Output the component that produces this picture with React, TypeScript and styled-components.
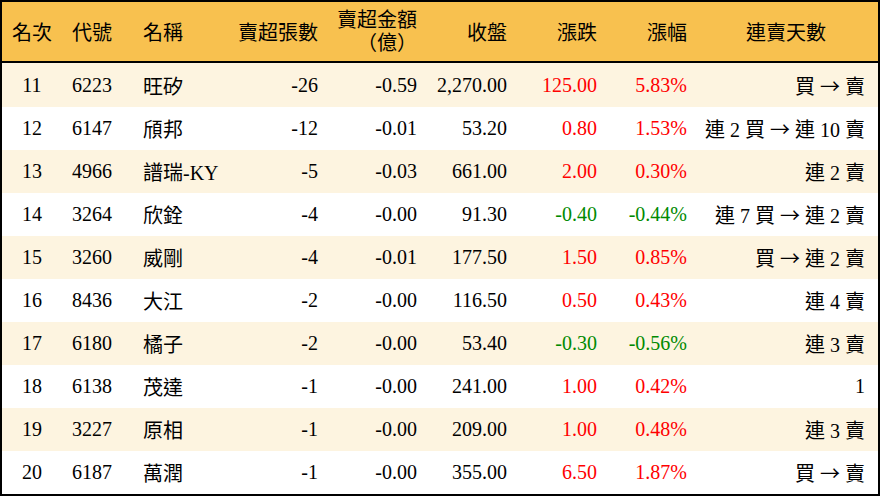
import React from 'react';
import styled, { createGlobalStyle } from 'styled-components';

type Trend = 'up' | 'down';

interface Row {
	rank: number;
	code: string;
	name: string;
	lots: string;
	amount: string;
	close: string;
	change: string;
	pct: string;
	trend: Trend;
	streak: string;
}

const rows: Row[] = [
	{ rank: 11, code: '6223', name: '旺矽', lots: '-26', amount: '-0.59', close: '2,270.00', change: '125.00', pct: '5.83%', trend: 'up', streak: '買 → 賣' },
	{ rank: 12, code: '6147', name: '頎邦', lots: '-12', amount: '-0.01', close: '53.20', change: '0.80', pct: '1.53%', trend: 'up', streak: '連 2 買 → 連 10 賣' },
	{ rank: 13, code: '4966', name: '譜瑞-KY', lots: '-5', amount: '-0.03', close: '661.00', change: '2.00', pct: '0.30%', trend: 'up', streak: '連 2 賣' },
	{ rank: 14, code: '3264', name: '欣銓', lots: '-4', amount: '-0.00', close: '91.30', change: '-0.40', pct: '-0.44%', trend: 'down', streak: '連 7 買 → 連 2 賣' },
	{ rank: 15, code: '3260', name: '威剛', lots: '-4', amount: '-0.01', close: '177.50', change: '1.50', pct: '0.85%', trend: 'up', streak: '買 → 連 2 賣' },
	{ rank: 16, code: '8436', name: '大江', lots: '-2', amount: '-0.00', close: '116.50', change: '0.50', pct: '0.43%', trend: 'up', streak: '連 4 賣' },
	{ rank: 17, code: '6180', name: '橘子', lots: '-2', amount: '-0.00', close: '53.40', change: '-0.30', pct: '-0.56%', trend: 'down', streak: '連 3 賣' },
	{ rank: 18, code: '6138', name: '茂達', lots: '-1', amount: '-0.00', close: '241.00', change: '1.00', pct: '0.42%', trend: 'up', streak: '1' },
	{ rank: 19, code: '3227', name: '原相', lots: '-1', amount: '-0.00', close: '209.00', change: '1.00', pct: '0.48%', trend: 'up', streak: '連 3 賣' },
	{ rank: 20, code: '6187', name: '萬潤', lots: '-1', amount: '-0.00', close: '355.00', change: '6.50', pct: '1.87%', trend: 'up', streak: '買 → 賣' },
];

// the arrow is drawn in the CJK face so it keeps its full width
function Streak(props: { text: string }) {
	const parts = props.text.split('→');
	return (
		<>
			{parts.map((p, i) => (
				<React.Fragment key={i}>
					{i > 0 && <Arrow>→</Arrow>}
					{p}
				</React.Fragment>
			))}
		</>
	);
}

export default function App() {
	return (
		<>
			<GlobalStyle />
			<Board>
				<Header>
					<Cell $align='center'>名次</Cell>
					<Cell>代號</Cell>
					<Cell>名稱</Cell>
					<Cell $align='right'>賣超張數</Cell>
					<Cell $align='right'>
						<TwoLine>
							<span>賣超金額</span>
							<span>（億）</span>
						</TwoLine>
					</Cell>
					<Cell $align='right'>收盤</Cell>
					<Cell $align='right'>漲跌</Cell>
					<Cell $align='right'>漲幅</Cell>
					<Cell $align='center'>連賣天數</Cell>
				</Header>
				<Body>
					{rows.map((r, i) => (
						<DataRow key={r.rank} $odd={i % 2 === 0}>
							<Cell $align='center'>{r.rank}</Cell>
							<Cell>{r.code}</Cell>
							<Cell>{r.name}</Cell>
							<Cell $align='right'>{r.lots}</Cell>
							<Cell $align='right'>{r.amount}</Cell>
							<Cell $align='right'>{r.close}</Cell>
							<Cell $align='right' $trend={r.trend}>{r.change}</Cell>
							<Cell $align='right' $trend={r.trend}>{r.pct}</Cell>
							<Cell $align='right'>
								<Streak text={r.streak} />
							</Cell>
						</DataRow>
					))}
				</Body>
			</Board>
		</>
	);
}

// Styled Components ...
const GlobalStyle = createGlobalStyle`
	body {
		margin: 0;
		background: #fff;
		font-family: 'Liberation Serif', 'Noto Sans CJK TC', serif;
	}
`;

const columns = '60px 71px 90px 105px 99px 90px 90px 90px 181px';

const Board = styled.div`
	box-sizing: border-box;
	width: 880px;
	height: 496px;
	border: 2px solid #000;
	display: flex;
	flex-direction: column;
	color: #000;
	font-size: 20px;
`;

const Header = styled.div`
	display: grid;
	grid-template-columns: ${columns};
	height: 59px;
	background: #f8c14f;
	border-bottom: 2px solid #000;
`;

const Body = styled.div`
	flex: 1;
	display: grid;
	grid-template-rows: 44px repeat(9, 43px);
`;

const DataRow = styled.div<{ $odd: boolean }>`
	display: grid;
	grid-template-columns: ${columns};
	background: ${(p) => (p.$odd ? '#fdf4e0' : '#fff')};
`;

const Cell = styled.div<{ $align?: 'left' | 'center' | 'right'; $trend?: Trend }>`
	display: flex;
	align-items: center;
	justify-content: ${(p) =>
		p.$align === 'right' ? 'flex-end' : p.$align === 'center' ? 'center' : 'flex-start'};
	padding: 0 10px;
	white-space: pre;
	color: ${(p) => (p.$trend === 'up' ? '#ff0000' : p.$trend === 'down' ? '#008a00' : '#000')};
	&:last-child {
		padding-right: 13px;
	}
`;

const TwoLine = styled.div`
	display: flex;
	flex-direction: column;
	align-items: flex-end;
	line-height: 23px;
`;

const Arrow = styled.span`
	font-family: 'Noto Sans CJK TC', sans-serif;
`;
